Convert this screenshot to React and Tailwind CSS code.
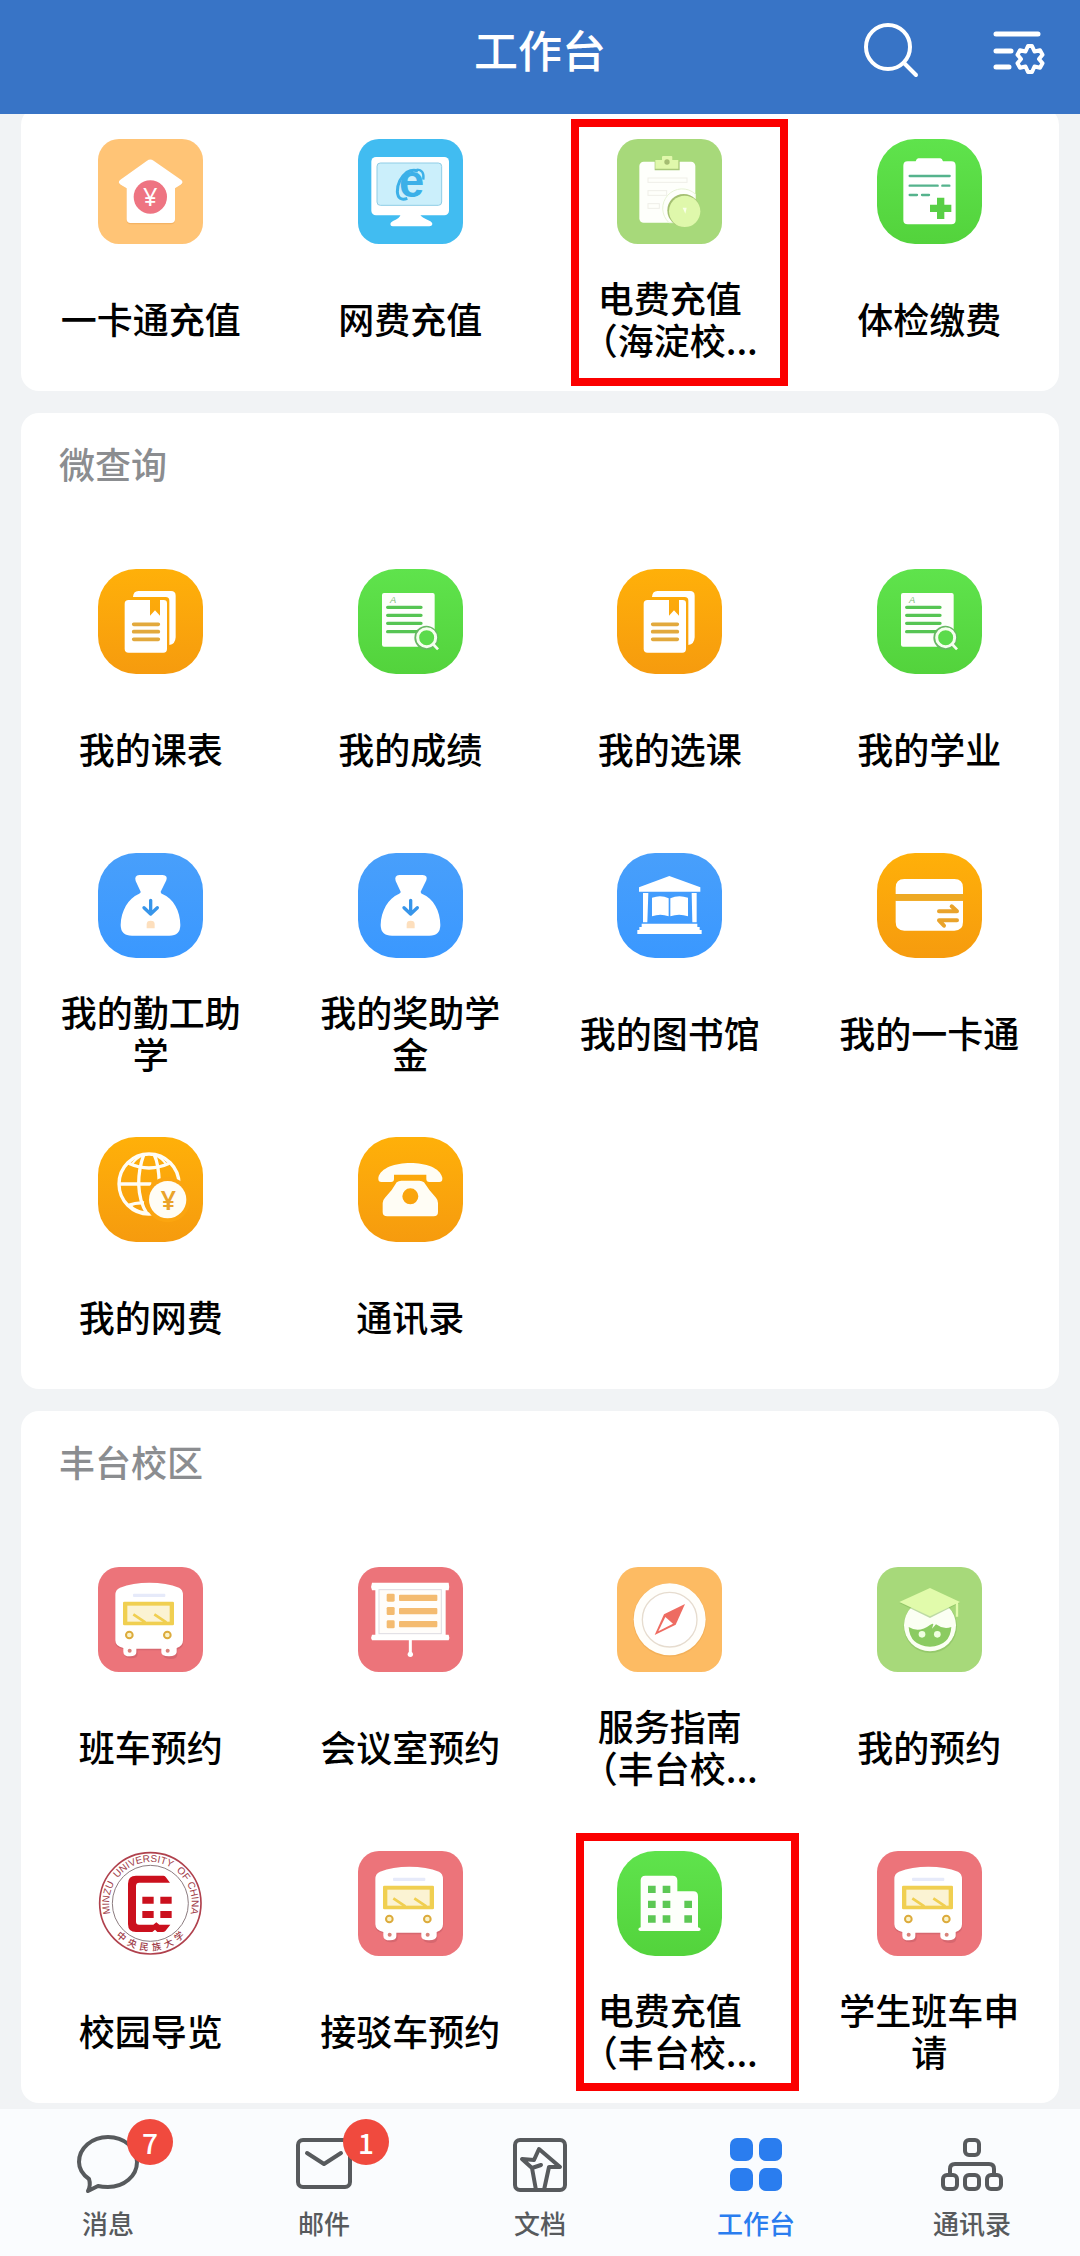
import clsx from 'clsx';

const TILE_STYLES = {
  peach: 'rounded-[21px] bg-[#ffc476]',
  sky: 'rounded-[21px] bg-[#41bcf1]',
  lime: 'rounded-[21px] bg-[#a7d97a]',
  coral: 'rounded-[21px] bg-[#ec747a]',
  amber: 'rounded-[21px] bg-[#fdbb63]',
  green: 'rounded-[38px] bg-linear-to-b from-[#5fe34c] to-[#53d33c]',
  orange: 'rounded-[38px] bg-linear-to-b from-[#ffb009] to-[#f69b0e]',
  blue: 'rounded-[38px] bg-linear-to-b from-[#489ffb] to-[#3a98ff]',
  plain: 'bg-white',
};

/* All tile drawings share a 315 unit square. */

const HouseYuan = () => (
  <>
    <path d="M147 66 Q157 58 167 66 L250 124 Q258 132 248 138 L231 148 V244 Q231 256 219 256 H98 Q86 256 86 244 V148 L68 138 Q58 132 66 124 Z" fill="#f0ad5c" opacity="0.7" />
    <path d="M147 65 Q157 58 167 65 L250 123 Q258 131 248 137 L231 148 V241 Q231 252 219 252 H98 Q86 252 86 241 V148 L68 137 Q58 131 66 123 Z" fill="#fff" />
    <circle cx="157" cy="174" r="50" fill="#ee7482" />
    <text x="157" y="201" textAnchor="middle" fontSize="76" fontFamily="Noto Sans" fill="#fff">¥</text>
  </>
);

const Monitor = () => (
  <>
    <rect x="40" y="54" width="233" height="175" rx="14" fill="#fff" />
    <rect x="57" y="72" width="194" height="127" rx="10" fill="#cbeffb" stroke="#8fcde6" strokeWidth="3" />
    <path d="M128 226 H186 Q190 236 214 245 Q224 250 223 256 Q222 262 214 262 H104 Q97 262 97 255 Q97 250 105 246 Q126 238 128 226 Z" fill="#fff" />
    <text x="161" y="174" textAnchor="middle" fontSize="136" fontWeight="700" fontFamily="Liberation Sans" fill="#3cb0e8">e</text>
    <path d="M180 96 Q164 90 146 100 Q118 122 118 158 Q120 188 148 178" fill="none" stroke="#3cb0e8" strokeWidth="9" />
    <path d="M176 92 Q200 92 196 122" fill="none" stroke="#3cb0e8" strokeWidth="7" />
  </>
);

const Clipboard = () => (
  <>
    <rect x="67" y="68" width="168" height="183" rx="13" fill="#fefffb" />
    <path d="M113 65 H135 V54 Q135 51 138 51 H163 Q166 51 166 54 V65 H188 V94 H113 Z" fill="#a9c97a" />
    <path d="M115 63 H135 V54 Q135 51 138 51 H163 Q166 51 166 54 V63 H184 V89 H115 Z" fill="#e0f8ab" />
    <circle cx="150" cy="69" r="8" fill="#a5bd72" />
    <g fill="none" stroke="#efefe8" strokeWidth="3">
      <rect x="93" y="117" width="117" height="13" />
      <rect x="93" y="155" width="56" height="14" />
      <rect x="93" y="194" width="34" height="14" />
    </g>
    <path d="M235 165 A58 58 0 0 0 156 251 H200 L235 200 Z" fill="#fefffb" stroke="#e7f3d5" strokeWidth="3" />
    <circle cx="200" cy="214" r="49" fill="#a4bf72" />
    <circle cx="203" cy="217" r="47" fill="#dff8ab" />
    <path d="M197 206 h12 l-4 18 Z" fill="#f8ffe8" />
  </>
);

const MedicalForm = () => (
  <>
    <path d="M92 67 H116 Q119 58 124 58 H190 Q195 58 198 67 H223 Q236 67 236 80 V243 Q236 256 223 256 H92 Q79 256 79 243 V80 Q79 67 92 67 Z" fill="#fff" />
    <path d="M98 111 H218 M98 140 H182 M196 140 H217 M98 168 H120 M135 168 H156" stroke="#55b38d" strokeWidth="7" strokeLinecap="round" />
    <path d="M191 176 V240 M159 208 H223" stroke="#58cf46" strokeWidth="22" />
  </>
);

const Notebook = () => (
  <>
    <path d="M105 84 Q106 66 121 66 H219 Q233 66 233 80 V205 Q232 226 214 228 V95 Q214 84 203 84 Z" fill="#fff" />
    <path d="M92 93 H156 V140 L171 124 L186 140 V93 H197 Q207 93 207 103 V240 Q207 251 196 251 H92 Q80 251 80 240 V104 Q80 93 92 93 Z" fill="#fff" />
    <path d="M107 166 H181 M107 188 H181 M107 211 H181" stroke="#e2a93d" strokeWidth="11" strokeLinecap="round" />
  </>
);

const GradeSheet = () => (
  <>
    <rect x="72" y="72" width="158" height="161" rx="6" fill="#fdfffb" />
    <text x="105" y="102" textAnchor="middle" fontSize="28" fontStyle="italic" fontFamily="Liberation Sans" fill="#82bd79">A</text>
    <path d="M89 115 H189 M89 139 H189 M89 163 H189 M89 188 H180" stroke="#55c552" strokeWidth="10" strokeLinecap="round" />
    <circle cx="205" cy="206" r="36" fill="#69b765" />
    <circle cx="206" cy="206" r="27" fill="#5bdb4b" stroke="#f5ffee" strokeWidth="9" />
    <path d="M225 225 L240 241" stroke="#f5ffee" strokeWidth="8" />
  </>
);

const MoneyBag = () => (
  <>
    <path d="M124 66 H194 Q210 67 205 82 L188 116 Q188 121 193 123 C226 136 247 175 247 216 Q247 248 214 248 H102 Q68 248 68 216 C69 174 91 136 122 123 Q129 120 128 116 L113 84 Q108 68 124 66 Z" fill="#fff" />
    <path d="M158 142 V180 M138 164 L158 183 L178 164" fill="none" stroke="#3795ea" strokeWidth="10" strokeLinecap="round" strokeLinejoin="round" />
    <path d="M146 213 Q146 203 158 203 Q170 203 170 213 V226 H146 Z" fill="#fddfbd" />
  </>
);

const Library = () => (
  <g fill="#fff">
    <path d="M66 103 L157 69 L250 103 V116 H66 Z" />
    <path d="M78 120 H94 L91 208 H78 Z M224 120 H239 V208 H226 Z" />
    <path d="M74 212 H241 V222 H248 V231 H254 V243 H61 V231 H67 V222 H74 Z" />
    <path d="M105 134 Q132 124 155 136 V190 Q130 180 105 190 Z M160 136 Q184 124 213 134 V190 Q186 180 160 190 Z" />
  </g>
);

const CardTransfer = () => (
  <>
    <path d="M56 123 V104 Q56 78 82 78 H232 Q258 78 258 104 V123 Z M56 143 H258 V207 Q258 233 232 233 H82 Q56 233 56 207 Z" fill="#fff" />
    <path d="M56 123 H258 V143 H56 Z" fill="#eea923" />
    <path d="M186 175 H240 L224 160 M240 202 H186 L201 218" fill="none" stroke="#e9a32b" strokeWidth="12" strokeLinecap="round" strokeLinejoin="round" />
  </>
);

const GlobeYuan = () => (
  <>
    <g fill="none" stroke="#fffdf5" strokeWidth="10">
      <circle cx="153" cy="141" r="90" />
      <path d="M137 54 Q122 95 122 141 Q124 195 147 230" />
      <path d="M169 54 Q182 80 184 141" />
      <path d="M92 79 Q153 107 214 79 M64 141 H160 M92 205 Q115 196 138 198" />
      <path d="M137 54 Q115 62 100 84 M169 54 Q191 62 206 84" strokeWidth="6" />
      <path d="M99 207 Q110 220 138 226" strokeWidth="6" />
    </g>
    <circle cx="209" cy="188" r="68" fill="#fba510" />
    <circle cx="209" cy="188" r="56" fill="#fffdf5" />
    <text x="211" y="218" textAnchor="middle" fontSize="80" fontWeight="600" fontFamily="Noto Sans" fill="#eaa32a">¥</text>
  </>
);

const Telephone = () => (
  <g fill="#fffdf5">
    <path d="M61 122 C68 92 112 78 157 78 C203 78 246 92 253 122 V126 Q253 135 244 135 H214 Q205 135 205 126 V113 H108 V126 Q108 135 99 135 H70 Q61 135 61 126 Z" />
    <path fillRule="evenodd" d="M116 136 Q122 131 130 131 H184 Q192 131 198 136 Q214 162 234 182 Q240 189 240 198 V225 Q240 238 227 238 H88 Q74 238 74 225 V198 Q74 189 81 182 Q102 162 116 136 Z M157 154 A24 24 0 1 0 157 202 A24 24 0 1 0 157 154 Z" />
  </g>
);

const Bus = () => (
  <>
    <path d="M50 84 Q50 68 64 61 Q102 45 152 45 Q204 45 241 61 Q254 68 254 84 V222 Q254 240 236 245 V262 Q234 274 215 273 Q192 272 192 258 V247 H117 V258 Q117 271 98 271 Q76 271 76 256 V244 Q50 240 50 222 Z" fill="#cf626b" opacity="0.7" transform="translate(2 3)" />
    <path d="M52 84 Q52 68 66 62 Q104 47 154 47 Q206 47 243 62 Q255 68 255 84 V220 Q255 237 236 243 V256 Q234 268 213 268 Q190 268 190 256 V245 H115 V256 Q115 268 96 268 Q76 268 76 254 V243 Q52 238 52 220 Z" fill="#fff" />
    <rect x="105" y="80" width="97" height="10" rx="3" fill="#e6eafa" />
    <rect x="75" y="104" width="153" height="71" rx="4" fill="#f0cf51" />
    <rect x="88" y="116" width="127" height="48" fill="#fbf3d3" />
    <path d="M106 142 L142 166 M169 142 L205 166" stroke="#f0cf51" strokeWidth="8" />
    <circle cx="94" cy="204" r="10" fill="#fbf3c8" stroke="#dcab3c" strokeWidth="6" />
    <circle cx="208" cy="204" r="10" fill="#fbf3c8" stroke="#dcab3c" strokeWidth="6" />
    <circle cx="95" cy="251" r="6" fill="#d8837a" />
    <circle cx="209" cy="251" r="6" fill="#d8837a" />
  </>
);

const Projector = () => (
  <>
    <path d="M157 215 V262" stroke="#fff" strokeWidth="9" />
    <circle cx="157" cy="262" r="8" fill="#fff" />
    <path d="M42 47 H272 Q275 58 272 70 H263 V203 H272 Q276 212 272 220 H42 Q37 212 42 203 H52 V70 H42 Q37 58 42 47 Z" fill="#fff" />
    <rect x="63" y="68" width="187" height="132" fill="#fffdfa" stroke="#dedbe2" strokeWidth="3" />
    <g fill="#f4bb70">
      <rect x="86" y="80" width="24" height="24" rx="4" />
      <rect x="86" y="120" width="24" height="24" rx="4" />
      <rect x="86" y="160" width="24" height="24" rx="4" />
      <rect x="123" y="83" width="115" height="19" rx="3" />
      <rect x="123" y="123" width="115" height="19" rx="3" />
      <rect x="123" y="162" width="115" height="19" rx="3" />
    </g>
  </>
);

const Compass = () => (
  <>
    <circle cx="158" cy="159" r="110" fill="#eda951" opacity="0.6" />
    <circle cx="158" cy="157" r="108" fill="#fffefa" />
    <circle cx="158" cy="158" r="82" fill="#fff" stroke="#e6dccf" strokeWidth="4" />
    <path d="M204 111 L141 142 L113 204 L176 173 Z" fill="#ee6c62" />
    <path d="M145 150 L168 170 L124 193 Z" fill="#fff" />
  </>
);

const Student = () => (
  <>
    <circle cx="160" cy="178" r="80" fill="#84ba5b" opacity="0.5" />
    <circle cx="159" cy="175" r="78" fill="#fbfff3" />
    <path d="M95 180 Q126 199 160 173 Q170 168 169 172 L165 185 Q172 178 177 172 Q200 189 223 180 Q220 236 159 239 Q98 236 95 180 Z" fill="#8bcb61" />
    <circle cx="135" cy="202" r="10" fill="#f0ffe0" />
    <circle cx="181" cy="202" r="10" fill="#f0ffe0" />
    <path d="M67 108 L159 68 L248 108 L159 153 Z" fill="#7fb558" opacity="0.5" />
    <path d="M67 105 L159 63 L249 105 L159 148 Z" fill="#e1fbab" />
    <path d="M240 106 V149" stroke="#e1fbab" strokeWidth="7" />
  </>
);

const Emblem = () => (
  <>
    <defs>
      <path id="emblem-top" d="M157 281 A124 124 0 1 1 158 281" />
      <path id="emblem-bottom" d="M15 157 A142 142 0 0 0 299 157" />
    </defs>
    <circle cx="157" cy="157" r="152" fill="#fff" stroke="#b0414d" strokeWidth="5" />
    <circle cx="157" cy="157" r="114" fill="none" stroke="#8c7c80" strokeWidth="3" />
    <text fontSize="30" fontFamily="Liberation Sans" fill="#a03d49" textAnchor="middle">
      <textPath href="#emblem-top" startOffset="50%">{'MINZU\u00a0 UNIVERSITY\u00a0 OF CHINA'}</textPath>
    </text>
    <text fontSize="28" fontWeight="500" fontFamily="Noto Sans CJK SC" fill="#a03d49" textAnchor="middle">
      <textPath href="#emblem-bottom" startOffset="50%">{'中\u00a0 央\u00a0 民\u00a0 族\u00a0 大\u00a0 学'}</textPath>
    </text>
    <path d="M114 74 H196 Q200 74 203 78 L216 95 H124 Q114 95 114 105 V212 Q114 221 123 221 H166 L175 214 L184 221 H217 L202 240 Q199 243 195 243 H178 L171 236 L163 243 H114 Q90 243 90 219 V98 Q90 74 114 74 Z" fill="#cb101d" />
    <path d="M133 137 H167 V158 H133 Z M187 137 H221 V158 H187 Z M133 180 H167 V201 H133 Z M187 180 H221 V201 H187 Z" fill="#cb101d" />
  </>
);

const Building = () => (
  <>
    <path d="M71 229 V88 Q71 74 85 74 H167 Q181 74 181 88 V121 H229 Q243 121 243 135 V229 Q251 230 251 235 Q251 240 245 240 H70 Q64 240 64 235 Q64 230 71 229 Z" fill="#fdfffb" />
    <path d="M93 104 h23 v22 h-23 Z M137 104 h23 v22 h-23 Z M93 149 h23 v22 h-23 Z M137 149 h23 v22 h-23 Z M202 149 h23 v22 h-23 Z M93 193 h23 v22 h-23 Z M137 193 h23 v22 h-23 Z M202 193 h23 v22 h-23 Z" fill="#5cc854" />
  </>
);

const SECTIONS = [
  {
    id: 'payment',
    apps: [
      { label: '一卡通充值', tile: 'peach', icon: HouseYuan },
      { label: '网费充值', tile: 'sky', icon: Monitor },
      { label: '电费充值\n（海淀校...', tile: 'lime', icon: Clipboard, frame: 'left-[31px] top-3 h-[267px] w-[217px]' },
      { label: '体检缴费', tile: 'green', icon: MedicalForm },
    ],
  },
  {
    id: 'query',
    title: '微查询',
    apps: [
      { label: '我的课表', tile: 'orange', icon: Notebook },
      { label: '我的成绩', tile: 'green', icon: GradeSheet },
      { label: '我的选课', tile: 'orange', icon: Notebook },
      { label: '我的学业', tile: 'green', icon: GradeSheet },
      { label: '我的勤工助\n学', tile: 'blue', icon: MoneyBag },
      { label: '我的奖助学\n金', tile: 'blue', icon: MoneyBag },
      { label: '我的图书馆', tile: 'blue', icon: Library },
      { label: '我的一卡通', tile: 'orange', icon: CardTransfer },
      { label: '我的网费', tile: 'orange', icon: GlobeYuan },
      { label: '通讯录', tile: 'orange', icon: Telephone },
    ],
  },
  {
    id: 'fengtai',
    title: '丰台校区',
    apps: [
      { label: '班车预约', tile: 'coral', icon: Bus },
      { label: '会议室预约', tile: 'coral', icon: Projector },
      { label: '服务指南\n（丰台校...', tile: 'amber', icon: Compass },
      { label: '我的预约', tile: 'lime', icon: Student },
      { label: '校园导览', tile: 'plain', icon: Emblem },
      { label: '接驳车预约', tile: 'coral', icon: Bus },
      { label: '电费充值\n（丰台校...', tile: 'green', icon: Building, frame: 'left-9 top-[14px] h-[258px] w-[223px]' },
      { label: '学生班车申\n请', tile: 'coral', icon: Bus },
    ],
  },
];

const AppTile = ({ app }) => {
  const Icon = app.icon;
  return (
    <button type="button" className="relative flex min-w-0 flex-col items-center pt-8 pb-[31px]">
      <span className={clsx('block h-[105px] w-[105px] overflow-hidden', TILE_STYLES[app.tile])}>
        <svg viewBox="0 0 315 315" className="h-full w-full" aria-hidden="true">
          <Icon />
        </svg>
      </span>
      <span className="mt-8 flex h-[84px] items-center text-center text-[36px] leading-[42px] font-medium whitespace-pre text-black">
        {app.label}
      </span>
      {app.frame && <span className={clsx('absolute border-8 border-[#fb0000]', app.frame)} />}
    </button>
  );
};

const Section = ({ section }) => (
  <section className="rounded-[18px] bg-white">
    {section.title && (
      <h2 className="h-[124px] px-[38px] pt-[26px] text-[36px] leading-[48px] font-medium text-[#8b8d90]">{section.title}</h2>
    )}
    <div className="grid grid-cols-4">
      {section.apps.map((app) => (
        <AppTile key={app.label} app={app} />
      ))}
    </div>
  </section>
);

const MessageIcon = () => (
  <path d="M12 58 Q15 52 13 46 Q3 39 3 29 C3 15 16 4 32 4 S61 15 61 29 S48 54 32 54 Q26 54 22 53 Z" />
);

const MailIcon = () => (
  <>
    <rect x="6" y="7" width="52" height="47" rx="5" />
    <path d="M15 20 L32 31 L49 20" />
  </>
);

const DocIcon = () => (
  <>
    <rect x="7" y="7" width="50" height="50" rx="5" />
    <path d="M28 57 L24 35 L14 26 L26 27 L31 16 L52 34 H41 L36 57 M24 35 L33 32" />
  </>
);

const WorkbenchIcon = () => (
  <g fill="currentColor" stroke="none">
    <rect x="6" y="5" width="23" height="23" rx="7" />
    <rect x="35" y="5" width="23" height="23" rx="7" />
    <rect x="6" y="35" width="23" height="23" rx="7" />
    <rect x="35" y="35" width="23" height="23" rx="7" />
  </g>
);

const ContactsIcon = () => (
  <>
    <rect x="25" y="7" width="14" height="15" rx="4" />
    <rect x="3" y="42" width="14" height="14" rx="4" />
    <rect x="25" y="42" width="14" height="14" rx="4" />
    <rect x="47" y="42" width="14" height="14" rx="4" />
    <path d="M10 42 V36 Q10 31 15 31 H49 Q54 31 54 36 V42" />
  </>
);

const TABS = [
  { label: '消息', icon: MessageIcon, badge: 7 },
  { label: '邮件', icon: MailIcon, badge: 1 },
  { label: '文档', icon: DocIcon },
  { label: '工作台', icon: WorkbenchIcon, active: true },
  { label: '通讯录', icon: ContactsIcon },
];

const TabBar = () => (
  <nav className="grid h-[147px] grid-cols-5 bg-[#fafcfe]">
    {TABS.map(({ label, icon: Icon, badge, active }) => (
      <a
        key={label}
        href="#"
        aria-current={active ? 'page' : undefined}
        className={clsx('flex flex-col items-center pt-6', active ? 'text-[#2a7def]' : 'text-[#575a5d]')}
      >
        <span className="relative h-16 w-16">
          <svg
            viewBox="0 0 64 64"
            className="h-16 w-16"
            fill="none"
            stroke="currentColor"
            strokeWidth="4"
            strokeLinejoin="round"
            strokeLinecap="round"
            aria-hidden="true"
          >
            <Icon />
          </svg>
          {badge && (
            <span className="absolute -top-[14px] left-[51px] flex h-[46px] w-[46px] items-center justify-center rounded-full bg-[#f04a3e] text-[28px] leading-none font-medium text-white">
              {badge}
            </span>
          )}
        </span>
        <span className="mt-2 text-[26px] leading-9 font-medium">{label}</span>
      </a>
    ))}
  </nav>
);

const Header = () => (
  <header className="relative z-10 grid h-[114px] grid-cols-3 items-center bg-[#3874c6] px-8 pb-3 text-white">
    <span />
    <h1 className="pb-1 text-center text-[44px] leading-[60px] font-medium">工作台</h1>
    <div className="flex items-center justify-end gap-[68px]">
      <button type="button" aria-label="搜索">
        <svg viewBox="0 0 60 60" className="h-[60px] w-[60px]" fill="none" stroke="currentColor" strokeWidth="4" strokeLinecap="round">
          <circle cx="24" cy="26" r="22" />
          <path d="M40 42 L52 54" />
        </svg>
      </button>
      <button type="button" aria-label="管理">
        <svg viewBox="0 0 56 56" className="h-14 w-14" fill="none" stroke="currentColor" strokeWidth="5" strokeLinecap="round">
          <path d="M4 11 H46 M4 28 H19 M4 44 H17" />
          <path
            d="M36 23 H40 L42.5 28.5 L48 27.3 L50.5 31.7 L47 36 L50.5 40.3 L48 44.7 L42.5 43.5 L40 49 H36 L33.5 43.5 L28 44.7 L25.5 40.3 L29 36 L25.5 31.7 L28 27.3 L33.5 28.5 Z"
            strokeWidth="4"
            strokeLinejoin="round"
          />
        </svg>
      </button>
    </div>
  </header>
);

const App = () => (
  <div className="flex min-h-screen flex-col bg-[#f1f3f5] font-['Noto_Sans_CJK_SC',sans-serif]">
    <Header />
    {/* the list is scrolled a little way under the header */}
    <main className="-mt-[7px] flex flex-1 flex-col gap-[22px] px-[21px] pb-[6px]">
      {SECTIONS.map((section) => (
        <Section key={section.id} section={section} />
      ))}
    </main>
    <TabBar />
  </div>
);

export default App;
